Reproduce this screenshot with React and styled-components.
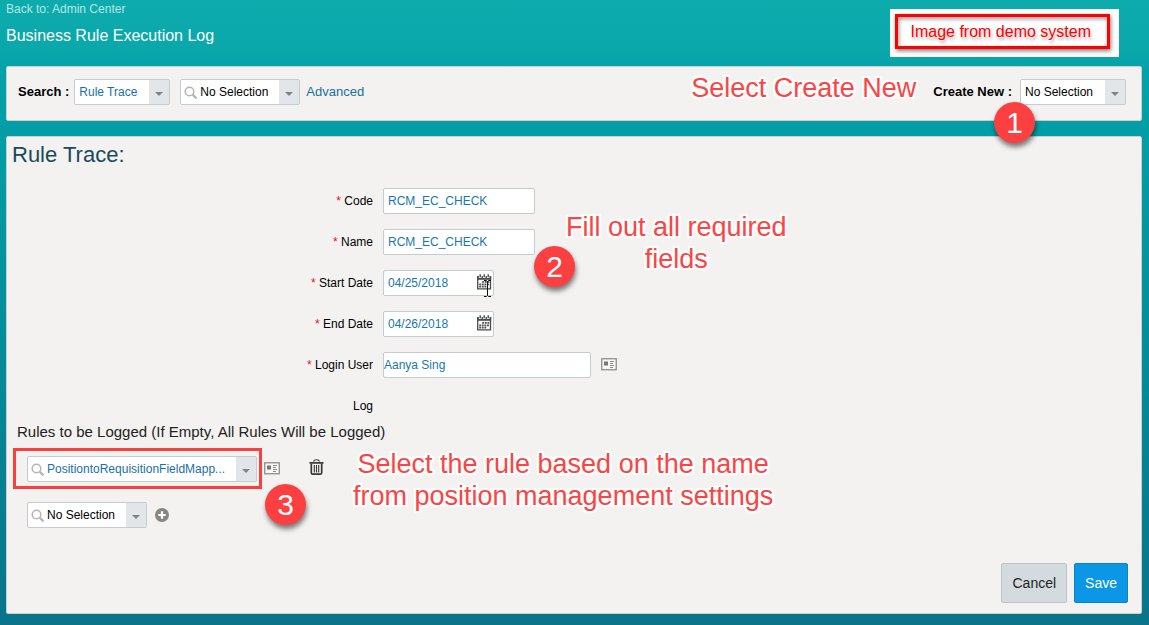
import React, { useState } from 'react';
import styled, { createGlobalStyle, css } from 'styled-components';

const App = () => {

    const [code, setCode] = useState('RCM_EC_CHECK');
    const [name, setName] = useState('RCM_EC_CHECK');
    const [startDate, setStartDate] = useState('04/25/2018');
    const [endDate, setEndDate] = useState('04/26/2018');
    const [user, setUser] = useState('Aanya Sing');

    return (
        <>
            <GlobalStyle />
            <Page>
                <PageHeader>
                    <div>
                        <BackLink href='#admin'>Back to: Admin Center</BackLink>
                        <PageTitle>Business Rule Execution Log</PageTitle>
                    </div>
                    <DemoNotice><span>Image from demo system</span></DemoNotice>
                </PageHeader>

                <SearchBar>
                    <BarLabel htmlFor='search-type'>Search :</BarLabel>
                    <Dropdown id='search-type' width={96} blue options={['Rule Trace']} />
                    <SearchTarget>
                        <Dropdown id='search-item' label='Search item' width={120} search options={['No Selection']} />
                        <TextLink href='#advanced'>Advanced</TextLink>
                    </SearchTarget>
                    <CreateGroup>
                        <Note>Select Create New</Note>
                        <BarLabel htmlFor='create-new'>Create New :</BarLabel>
                        <Dropdown id='create-new' width={106} options={['No Selection']} />
                        <CreateStep>1</CreateStep>
                    </CreateGroup>
                </SearchBar>

                <Panel>
                    <PanelTitle>Rule Trace:</PanelTitle>

                    <Fields>
                        <Field id='code' text='Code'>
                            <TextInput id='code' $width={152} value={code} onChange={(e) => setCode(e.target.value)} />
                        </Field>
                        <Field id='name' text='Name'>
                            <TextInput id='name' $width={152} value={name} onChange={(e) => setName(e.target.value)} />
                        </Field>
                        <Field id='start-date' text='Start Date'>
                            <DateInput id='start-date' value={startDate} onChange={(e) => setStartDate(e.target.value)}>
                                <TextCursor />
                            </DateInput>
                        </Field>
                        <Field id='end-date' text='End Date'>
                            <DateInput id='end-date' value={endDate} onChange={(e) => setEndDate(e.target.value)} />
                        </Field>
                        <Field id='login-user' text='Login User'>
                            <TextInput id='login-user' $width={208} $tight value={user} onChange={(e) => setUser(e.target.value)} />
                            <IconButton aria-label='User details'><CardIcon /></IconButton>
                        </Field>
                        <FieldRow>
                            <FieldLabel as='span'>Log</FieldLabel>
                        </FieldRow>
                        <FieldsStep>2</FieldsStep>
                        <FieldsNote>Fill out all required<br />fields</FieldsNote>
                    </Fields>

                    <RulesTitle>Rules to be Logged (If Empty, All Rules Will be Logged)</RulesTitle>
                    <RuleList>
                        <RuleRow>
                            <Highlight>
                                <Dropdown id='rule-1' label='Rule' width={230} blue search options={['PositiontoRequisitionFieldMapp...']} />
                            </Highlight>
                            <IconButton aria-label='Rule details'><CardIcon /></IconButton>
                            <DeleteButton aria-label='Delete rule'><TrashIcon /></DeleteButton>
                        </RuleRow>
                        <RuleRow $indent>
                            <Dropdown id='rule-2' label='New rule' width={120} search options={['No Selection']} />
                            <IconButton aria-label='Add rule'><PlusIcon /></IconButton>
                        </RuleRow>
                        <RuleStep>3</RuleStep>
                        <RuleNote>Select the rule based on the name<br />from position management settings</RuleNote>
                    </RuleList>

                    <Actions>
                        <ActionButton>Cancel</ActionButton>
                        <ActionButton $primary>Save</ActionButton>
                    </Actions>
                </Panel>
            </Page>
        </>
    );
}

export default App;

const Dropdown = ({ id, label, width, blue, search, options }) => (
    <SelectBox $width={width}>
        {search && <SearchIcon />}
        <Select id={id} aria-label={label} $blue={blue} $search={search}>
            {options.map((option) => <option key={option}>{option}</option>)}
        </Select>
        <Arrow />
    </SelectBox>
);

const Field = ({ id, text, children }) => (
    <FieldRow>
        <FieldLabel htmlFor={id}><Required>*</Required> {text}</FieldLabel>
        {children}
    </FieldRow>
);

const DateInput = ({ id, value, onChange, children }) => (
    <DateBox>
        <input id={id} value={value} onChange={onChange} />
        <IconButton aria-label='Open calendar'><CalendarIcon /></IconButton>
        {children}
    </DateBox>
);

const SearchIcon = () => (
    <SearchSvg width='14' height='14' viewBox='0 0 14 14' fill='none' stroke='#b4b4b4'>
        <circle cx='5.5' cy='5.5' r='4.3' strokeWidth='1.5' />
        <path d='M8.8 8.8l3.6 3.6' strokeWidth='2.2' />
    </SearchSvg>
);

const CardIcon = () => (
    <svg width='16' height='14' viewBox='0 0 16 14'>
        <rect x='.75' y='.75' width='14.5' height='11' fill='#f6f6f5' stroke='#8e8e8c' strokeWidth='1.3' />
        <path d='M3 3.5h4v4H3z' fill='#777775' />
        <path d='M9 3.5h4M9 5.5h3M9 7.5h4M9 9.5h3' stroke='#8e8e8c' />
    </svg>
);

const CalendarIcon = () => (
    <svg width='15' height='18' viewBox='0 0 15 18'>
        <path d='M.7 3h12.8v11.8H.7z' fill='#fafafa' stroke='#4c4c4c' strokeWidth='1.3' />
        <path d='M0 2h14.200v3.800H0z' fill='#4c4c4c' />
        <path d='M3.200 0v4M7.200 0v4M11.200 0v4' stroke='#fff' strokeWidth='2.600' />
        <path d='M3.200 .3v3M7.200 .3v3M11.200 .3v3' stroke='#4c4c4c' strokeWidth='1.400' />
        <path d='M5.200 7.900H12.500M2.200 10.300H12.500M2.200 12.700h7.500' stroke='#555' strokeWidth='1.700' strokeDasharray='1.900 .7' />
    </svg>
);

const TrashIcon = () => (
    <svg width='15' height='20' viewBox='0 0 15 20' fill='none' stroke='#383838'>
        <path d='M4.500 2.500c.6-2.300 5.400-2.300 6 0' strokeWidth='1.100' />
        <path d='M.5 3.900h14' strokeWidth='1.700' />
        <path d='M2.300 4.500v9.200q0 1.500 1.500 1.500h7.400q1.500 0 1.500-1.500V4.500' strokeWidth='1.700' />
        <path d='M5.300 6v7.500M7.500 6v7.500M9.700 6v7.500' strokeWidth='1.100' />
    </svg>
);

const PlusIcon = () => (
    <svg width='14' height='14' viewBox='0 0 14 14'>
        <circle cx='7' cy='7' r='7' fill='#868683' />
        <path d='M7 3.300v7.400M3.300 7h7.400' stroke='#fff' strokeWidth='2.200' />
    </svg>
);

const TextCursor = () => (
    <CursorSvg width='9' height='17' viewBox='0 0 9 17' fill='none' stroke='#111'>
        <path d='M1 .5h2.500l1 1 1-1H8M4.500 1.500v14M1 16.500h2.500l1-1 1 1H8' />
    </CursorSvg>
);

const GlobalStyle = createGlobalStyle`
    * {
        box-sizing: border-box;
    }
    body {
        margin: 0;
        font-family: 'Liberation Sans', Arial, sans-serif;
        font-size: 12px;
        color: #000;
    }
    button, input, select {
        font: inherit;
        margin: 0;
    }
`;

const Page = styled.div`
    display: flex;
    flex-direction: column;
    min-height: 100vh;
    padding: 0 7px 11px 6px;
    background: linear-gradient(#0eabad 0, #0aa8ab 48px, #03a2a8 72px, #039ca4 160px, #09748a 100%);
`;

const PageHeader = styled.header`
    display: flex;
    justify-content: space-between;
    align-items: flex-start;
    height: 66px;
    padding-right: 23px;
`;

const BackLink = styled.a`
    display: block;
    line-height: 18px;
    color: #b4e8e7;
    text-decoration: none;
`;

const PageTitle = styled.h1`
    margin: 8px 0 0;
    font-size: 16px;
    line-height: 20px;
    font-weight: normal;
    color: #fff;
`;

const DemoNotice = styled.div`
    margin-top: 9px;
    padding: 5px 9px 8px 5px;
    background: #fff;

    span {
        display: block;
        padding: 0 16px 0 13px;
        border: 3px solid #fe0000;
        font-size: 16px;
        line-height: 29px;
        color: #fe0000;
        text-shadow: 1px 3px 3px rgba(0, 0, 0, 0.3);
        box-shadow: 1px 2px 4px rgba(0, 0, 0, 0.5), inset 1px 2px 4px rgba(0, 0, 0, 0.4);
    }
`;

const box = css`
    background: #f3f2f0;
    border: 1px solid #c9cfce;
    border-radius: 2px;
`;

const SearchBar = styled.section`
    ${box}
    display: flex;
    align-items: flex-start;
    gap: 5px;
    height: 55px;
    margin-bottom: 15px;
    padding: 12px 15px 0 11px;
`;

const BarLabel = styled.label`
    font-size: 13px;
    line-height: 26px;
    font-weight: bold;
`;

const SearchTarget = styled.div`
    display: flex;
    gap: 6px;
    margin-left: 5px;
`;

const TextLink = styled.a`
    font-size: 13px;
    line-height: 26px;
    color: #1a6fa3;
    text-decoration: none;
`;

const CreateGroup = styled.div`
    position: relative;
    display: flex;
    gap: 8px;
    margin-left: auto;
`;

const SelectBox = styled.div`
    position: relative;
    width: ${props => props.$width}px;
    height: 26px;
`;

const Select = styled.select`
    appearance: none;
    width: 100%;
    height: 26px;
    padding: 0 22px 0 ${props => props.$search ? '19px' : '4px'};
    border: 1px solid #c5cccf;
    border-radius: 2px;
    background: #fff;
    color: ${props => props.$blue ? '#1a6fa3' : '#000'};
`;

const Arrow = styled.span`
    position: absolute;
    top: 1px;
    right: 1px;
    width: 20px;
    height: 24px;
    background: #e3e6e8;
    pointer-events: none;

    &::after {
        content: '';
        position: absolute;
        left: 6px;
        top: 12px;
        border: 4px solid transparent;
        border-top-color: #7d8588;
        border-bottom: 0;
    }
`;

const SearchSvg = styled.svg`
    position: absolute;
    left: 4px;
    top: 7px;
    pointer-events: none;
`;

const Panel = styled.main`
    ${box}
    flex: 1;
    display: flex;
    flex-direction: column;
`;

const PanelTitle = styled.h2`
    margin: 4px 0 0 5px;
    font-size: 22px;
    line-height: 28px;
    font-weight: normal;
    color: #184a5b;
`;

const Fields = styled.div`
    position: relative;
    display: flex;
    flex-direction: column;
    gap: 15px;
    margin-top: 19px;
`;

const FieldRow = styled.div`
    display: flex;
    align-items: center;
    gap: 10px;
    height: 26px;
`;

const FieldLabel = styled.label`
    width: 366px;
    text-align: right;
`;

const Required = styled.span`
    color: #e8112d;
`;

const TextInput = styled.input`
    width: ${props => props.$width}px;
    height: 26px;
    padding: 0 ${props => props.$tight ? '0' : '4px'};
    border: 1px solid #c5cccf;
    border-radius: 2px;
    background: #fff;
    color: #1a78a8;
`;

const DateBox = styled.div`
    position: relative;
    display: flex;
    align-items: center;
    width: 111px;
    height: 26px;
    padding-right: 1px;
    border: 1px solid #c5cccf;
    border-radius: 2px;
    background: #fff;

    input {
        flex: 1;
        min-width: 0;
        padding: 0 4px;
        border: 0;
        background: none;
        color: #1a78a8;
    }
`;

const CursorSvg = styled.svg`
    position: absolute;
    right: 1px;
    bottom: -2px;
`;

const IconButton = styled.button`
    display: flex;
    padding: 0;
    border: 0;
    background: none;
    cursor: pointer;
`;

const DeleteButton = styled(IconButton)`
    margin-left: 27px;
`;

const RulesTitle = styled.h3`
    margin: 3px 0 0 10px;
    font-size: 15px;
    line-height: 20px;
    font-weight: normal;
    color: #222;
`;

const RuleList = styled.div`
    position: relative;
    display: flex;
    flex-direction: column;
    gap: 13px;
    padding: 6px 0 0 6px;
`;

const RuleRow = styled.div`
    display: flex;
    align-items: center;
    gap: ${props => props.$indent ? '8px' : '2px'};
    padding-left: ${props => props.$indent ? '14px' : '0'};
`;

const Highlight = styled.div`
    padding: 5px 2px 4px 11px;
    border: 3px solid #f9403f;
`;

const Actions = styled.div`
    display: flex;
    justify-content: flex-end;
    gap: 7px;
    margin-top: auto;
    padding: 10px 13px 10px 0;
`;

const ActionButton = styled.button`
    height: 40px;
    padding: 0 10px;
    border: 1px solid ${props => props.$primary ? '#0a82c9' : '#bcc4c6'};
    border-radius: 2px;
    background: ${props => props.$primary ? '#0b97e5' : '#d4dbde'};
    color: ${props => props.$primary ? '#fff' : '#222'};
    font-size: 14px;
    cursor: pointer;
`;

const Note = styled.div`
    margin: -7px 9px 0 0;
    font-size: 27px;
    line-height: 32px;
    text-align: center;
    white-space: nowrap;
    color: #fc4444;
    text-shadow: 2px 0 1px #fff, -2px 0 1px #fff, 0 2px 1px #fff, 0 -2px 1px #fff,
        2px 2px 1px #fff, -2px 2px 1px #fff, 2px -2px 1px #fff, -2px -2px 1px #fff;
`;

const FieldsNote = styled(Note)`
    position: absolute;
    left: 559px;
    top: 30px;
`;

const RuleNote = styled(Note)`
    position: absolute;
    left: 346px;
    top: 13px;
`;

const Step = styled.span`
    position: absolute;
    width: 41px;
    height: 41px;
    border-radius: 50%;
    background: #fc4042;
    color: #fff;
    font-size: 30px;
    line-height: 41px;
    text-align: center;
    box-shadow: 1px 4px 5px rgba(0, 0, 0, 0.5);
`;

const CreateStep = styled(Step)`
    right: 91px;
    top: 23px;
`;

const FieldsStep = styled(Step)`
    left: 527px;
    top: 58px;
`;

const RuleStep = styled(Step)`
    left: 258px;
    top: 42px;
`;
